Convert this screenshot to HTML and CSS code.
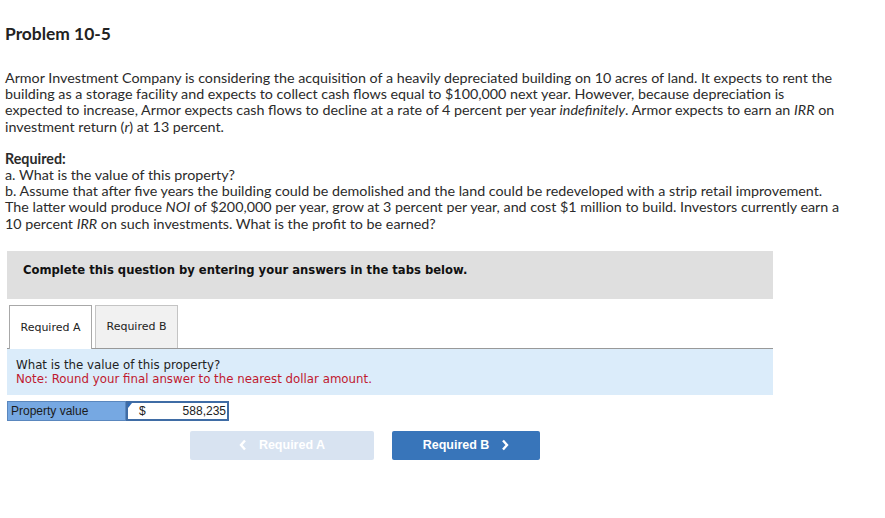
FILE: index.html
```html
<!DOCTYPE html>
<html>
<head>
<meta charset="utf-8">
<link rel="stylesheet" href="styles.css">
</head>
<body>
<div class="page">
  <h1 class="title">Problem 10-5</h1>
  <p class="para intro">Armor Investment Company is considering the acquisition of a heavily depreciated building on 10 acres of land. It expects to rent the<br>building as a storage facility and expects to collect cash flows equal to $100,000 next year. However, because depreciation is<br>expected to increase, Armor expects cash flows to decline at a rate of 4 percent per year <i>indefinitely</i>. Armor expects to earn an <i>IRR</i> on<br>investment return (<i>r</i>) at 13 percent.</p>
  <p class="para req"><b>Required:</b><br>a. What is the value of this property?<br>b. Assume that after five years the building could be demolished and the land could be redeveloped with a strip retail improvement.<br>The latter would produce <i>NOI</i> of $200,000 per year, grow at 3 percent per year, and cost $1 million to build. Investors currently earn a<br>10 percent <i>IRR</i> on such investments. What is the profit to be earned?</p>

  <div class="work">
    <div class="banner">Complete this question by entering your answers in the tabs below.</div>
    <div class="tabs">
      <div class="tab active">Required A</div>
      <div class="tab">Required B</div>
    </div>
    <div class="panel">
      <div class="q">What is the value of this property?</div>
      <div class="note">Note: Round your final answer to the nearest dollar amount.</div>
    </div>
    <div class="answer">
      <div class="label">Property value</div>
      <div class="input"><span class="flag"></span><span class="cur">$</span><span class="val">588,235</span></div>
    </div>
    <div class="nav">
      <div class="btn disabled"><svg class="chev" width="8" height="12" viewBox="0 0 8 12"><polyline points="6,1.5 2,6 6,10.5" fill="none" stroke="#fff" stroke-width="2.4"/></svg><span>Required A</span></div>
      <div class="btn primary"><span>Required B</span><svg class="chev" width="8" height="12" viewBox="0 0 8 12"><polyline points="2,1.5 6,6 2,10.5" fill="none" stroke="#fff" stroke-width="2.4"/></svg></div>
    </div>
  </div>
</div>
</body>
</html>
```
FILE: styles.css
```css
html, body { margin: 0; padding: 0; background: #fff; }
.page { padding: 0 0 0 5px; font-family: Lato, "Open Sans", sans-serif; color: #2b2b2b; }
.title { font-size: 17.4px; font-weight: 700; margin: 0; padding-top: 25px; line-height: 18px; color: #222; }
.para { font-size: 14.3px; line-height: 16.2px; margin: 0; white-space: nowrap; }
.intro { margin-top: 27px; }
.req { margin-top: 16px; }
.req b { font-weight: 700; }
.work { width: 766px; margin-left: 2px; margin-top: 19px; font-family: "DejaVu Sans", Verdana, sans-serif; }
.banner { background: #dfdfdf; height: 48px; box-sizing: border-box; padding: 12px 0 0 16px; font-size: 11.6px; font-weight: 700; color: #111; }
.tabs { display: flex; gap: 3px; margin-top: 6px; padding-left: 2px; border-bottom: 1px solid #999; height: 43px; }
.tab { width: 83px; box-sizing: border-box; border: 1px solid #c4c4c4; border-bottom: none; background: #f1f1f1; font-size: 11px; color: #222; display: flex; align-items: center; justify-content: center; height: 43px; }
.tab.active { background: #fff; border-color: #a8a8a8; height: 44px; margin-bottom: -1px; }
.panel { background: #dbecfa; height: 46px; box-sizing: border-box; padding: 9px 0 0 9px; font-size: 11.8px; line-height: 14.5px; }
.q { color: #222; }
.note { color: #c0192f; }
.answer { display: flex; margin-top: 6px; height: 20px; font-family: "Liberation Sans", Arial, sans-serif; font-size: 12px; }
.label { width: 119px; box-sizing: border-box; background: #76a8e2; border: 1px solid #5a87be; padding: 2px 0 0 3px; color: #1b1b1b; }
.input { position: relative; width: 103px; box-sizing: border-box; border: 2px solid #3f6ca5; background: #fff; display: flex; justify-content: space-between; padding: 1px 1px 0 11px; color: #222; }
.flag { position: absolute; left: 0; top: 0; width: 0; height: 0; border-top: 5px solid #2f6ab5; border-right: 4px solid transparent; }
.nav { display: flex; gap: 18px; margin-top: 10px; padding-left: 183px; font-family: "Liberation Sans", Arial, sans-serif; }
.btn { height: 29px; border-radius: 2px; font-size: 12.5px; font-weight: 700; color: #fff; display: flex; align-items: center; justify-content: center; gap: 12px; }
.btn.disabled { width: 184px; background: #d8e3f1; }
.btn.primary { width: 148px; background: #3875ba; }
.chev { display: block; }
```
